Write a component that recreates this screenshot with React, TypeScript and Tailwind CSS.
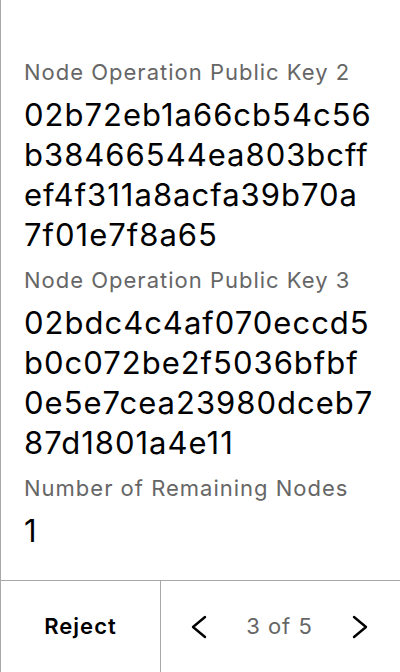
const FIELDS = [
  {
    label: 'Node Operation Public Key 2',
    lines: ['02b72eb1a66cb54c56', 'b38466544ea803bcff', 'ef4f311a8acfa39b70a', '7f01e7f8a65'],
  },
  {
    label: 'Node Operation Public Key 3',
    lines: ['02bdc4c4af070eccd5', 'b0c072be2f5036bfbf', '0e5e7cea23980dceb7', '87d1801a4e11'],
  },
  {
    label: 'Number of Remaining Nodes',
    lines: ['1'],
  },
];

function Chevron({ dir }: { dir: 'left' | 'right' }) {
  return (
    <svg width="16" height="24" viewBox="0 0 16 24" fill="none" stroke="currentColor" strokeWidth="2.4" strokeLinecap="round" strokeLinejoin="round">
      <polyline points={dir === 'left' ? '14,2 2,12 14,22' : '2,2 14,12 2,22'} />
    </svg>
  );
}

export default function App() {
  return (
    <div
      className="h-[672px] w-[400px] bg-white flex flex-col border-l border-[#a8a8a8] text-black"
      style={{ fontFamily: 'Inter, "Noto Sans", sans-serif' }}
    >
      {/* Transaction details */}
      <div className="flex-1 overflow-hidden pl-[23px] pr-2 pt-[58px] flex flex-col gap-[11px]">
        {FIELDS.map((f) => (
          <div key={f.label} className="flex flex-col">
            <div className="text-[22px] leading-[28px] tracking-[1px] text-[#666666]">{f.label}</div>
            <div className="mt-[9px] text-[31px] leading-[40px] tracking-[1px] whitespace-nowrap">
              {f.lines.map((l) => (
                <div key={l}>{l}</div>
              ))}
            </div>
          </div>
        ))}
      </div>

      {/* Bottom actions */}
      <div className="h-[92px] shrink-0 border-t border-[#a8a8a8] flex">
        <button className="w-[160px] border-r border-[#a8a8a8] text-[22px] font-semibold tracking-[1px] flex items-center justify-center">
          Reject
        </button>
        <div className="flex-1 flex items-center justify-between pl-[30px] pr-[32px]">
          <Chevron dir="left" />
          <span className="text-[22px] tracking-[1px] text-[#666666]">3 of 5</span>
          <Chevron dir="right" />
        </div>
      </div>
    </div>
  );
}
